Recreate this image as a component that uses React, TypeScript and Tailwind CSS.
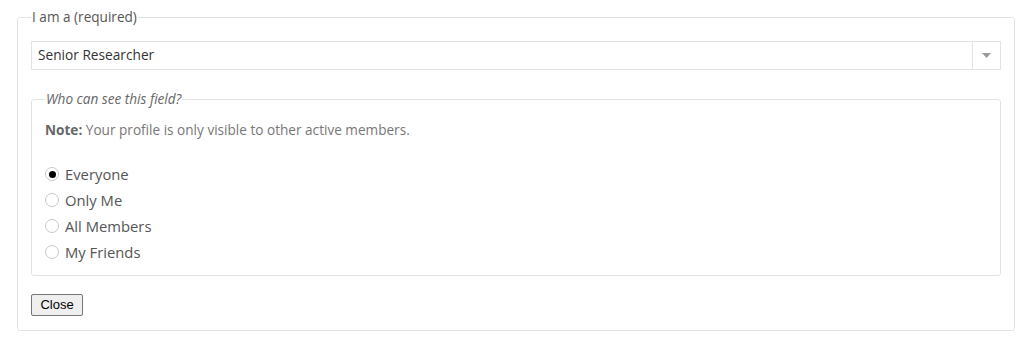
import { useState } from "react";

const options = ["Everyone", "Only Me", "All Members", "My Friends"];

function Radio({ checked }: { checked: boolean }) {
  return (
    <span className="flex h-[14px] w-[14px] items-center justify-center rounded-full border border-[#c8c8c8] bg-white">
      {checked && <span className="h-[7px] w-[7px] rounded-full bg-black"></span>}
    </span>
  );
}

export default function App() {
  const [who, setWho] = useState("Everyone");

  return (
    <div className="h-[342px] w-[1024px] bg-white pt-[7px]" style={{ fontFamily: '"Open Sans", "Noto Sans", sans-serif' }}>
      <fieldset className="ml-[17px] w-[996px] rounded-[3px] border border-[#e3e3e3] px-[13px] pt-[14px] pb-[14px]">
        <legend className="px-[1px] text-[13.6px] leading-[20px] text-[#555]">I am a (required)</legend>

        <div className="flex h-[29px] w-[970px] items-stretch border border-[#e3e3e3] bg-white">
          <div className="flex flex-1 items-center pl-[6px] text-[13.7px] text-[#333]">Senior Researcher</div>
          <div className="flex w-[28px] items-center justify-center border-l border-[#e3e3e3]">
            <svg width="9" height="5" viewBox="0 0 9 5">
              <path d="M0 0h9L4.5 5z" fill="#999" />
            </svg>
          </div>
        </div>

        <fieldset className="mt-[19px] w-[970px] rounded-[3px] border border-[#e3e3e3] px-[13px] pt-[11px] pb-[10px]">
          <legend className="px-[1px] text-[13.6px] italic leading-[20px] text-[#666]">Who can see this field?</legend>
          <p className="text-[13.6px] leading-[20px] text-[#777]">
            <strong className="font-bold text-[#666]">Note:</strong> Your profile is only visible to other active members.
          </p>
          <ul className="mt-[21px]">
            {options.map((o) => (
              <li key={o} className="flex h-[26px] cursor-pointer items-center gap-[6px] text-[14.8px] text-[#555]" onClick={() => setWho(o)}>
                <Radio checked={who === o} />
                <span>{o}</span>
              </li>
            ))}
          </ul>
        </fieldset>

        <button
          className="mt-[18px] h-[22px] w-[52px] rounded-[2px] border border-[#767676] bg-[#efefef] text-[13px] text-black"
          style={{ fontFamily: '"Liberation Sans", Arial, sans-serif' }}
        >
          Close
        </button>
      </fieldset>
    </div>
  );
}
